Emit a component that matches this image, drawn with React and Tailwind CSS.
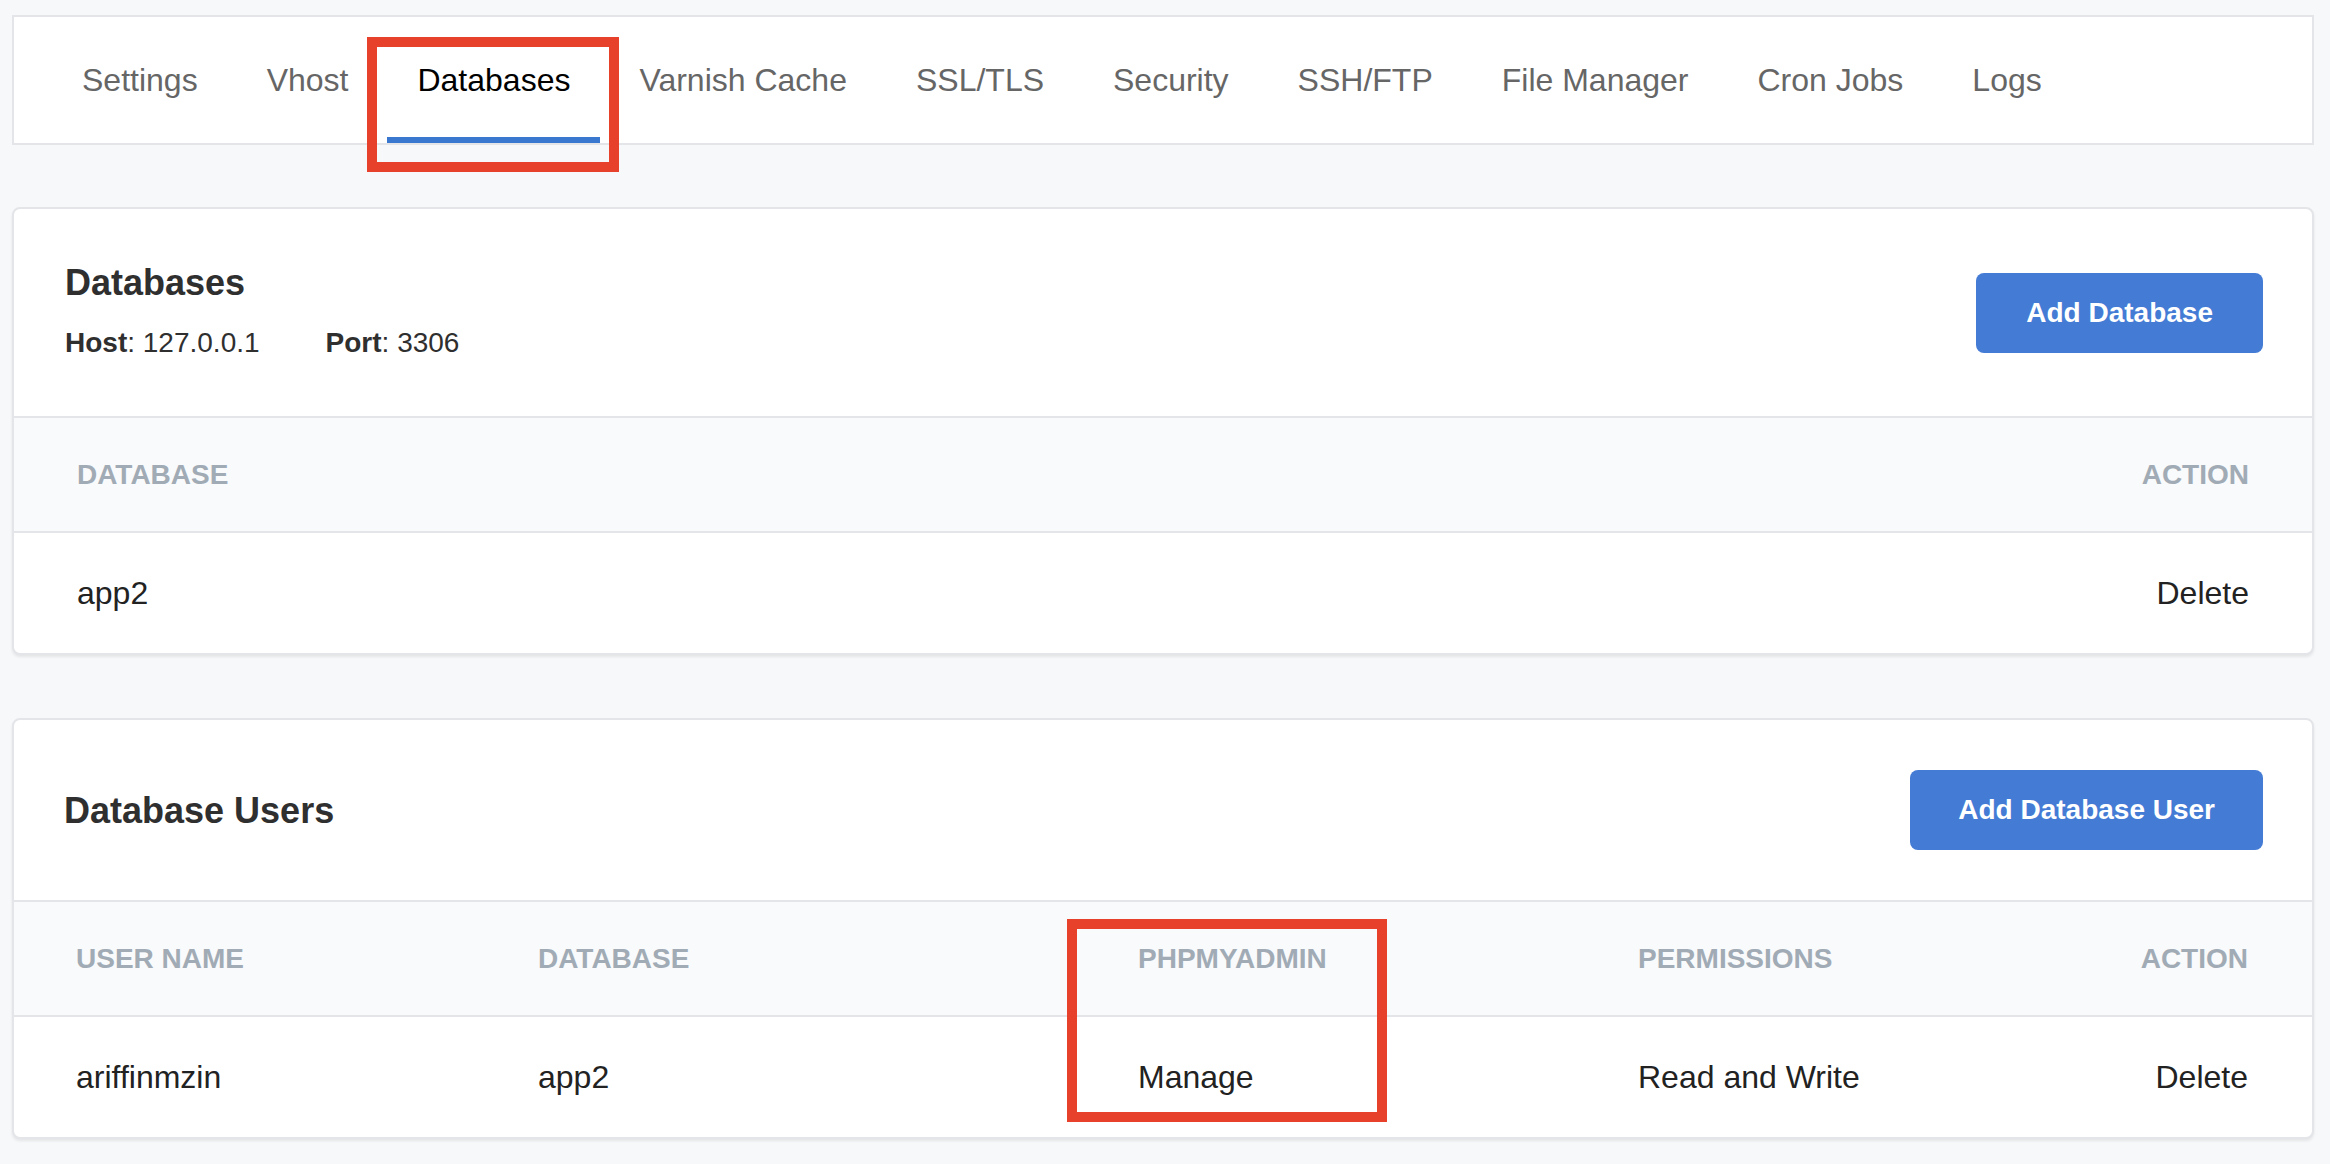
import React from 'react'

const tabs = [
  'Settings',
  'Vhost',
  'Databases',
  'Varnish Cache',
  'SSL/TLS',
  'Security',
  'SSH/FTP',
  'File Manager',
  'Cron Jobs',
  'Logs',
]

/* ------------------------------------------------------------------ */
/*  Tab bar                                                            */
/* ------------------------------------------------------------------ */

function TabBar({ active }) {
  return (
    <div className="flex h-[130px] items-stretch border-2 border-[#e3e5e8] bg-white pl-[38px]">
      <div className="flex items-stretch gap-[9px]">
        {tabs.map((t) => (
          <div
            key={t}
            className={
              t === active
                ? 'flex items-center border-y-[6px] border-t-transparent border-b-[#3a78d0] px-[30px] text-[32px] text-black'
                : 'flex items-center border-y-[6px] border-transparent px-[30px] text-[32px] text-[#666666]'
            }
          >
            {t}
          </div>
        ))}
      </div>
    </div>
  )
}

/* ------------------------------------------------------------------ */
/*  Card shell                                                         */
/* ------------------------------------------------------------------ */

function Card({ children, className }) {
  return (
    <div
      className={
        'overflow-hidden rounded-[8px] border-2 border-[#e3e5e8] bg-white shadow-[0_2px_3px_rgba(0,0,0,0.08)] ' +
        (className || '')
      }
    >
      {children}
    </div>
  )
}

function AddButton({ label, className }) {
  return (
    <button
      type="button"
      className={
        'h-[80px] rounded-[8px] bg-[#437bd5] text-[28px] font-bold text-white ' + (className || '')
      }
    >
      {label}
    </button>
  )
}

/* ================================================================== */
/*  App                                                                */
/* ================================================================== */

export default function App() {
  return (
    <div className="relative min-h-[1164px] bg-[#f7f8fa] pl-[12px] pr-[16px] pt-[15px] font-['Liberation_Sans',Arial,sans-serif]">
      <TabBar active="Databases" />

      {/* Databases */}
      <Card className="mt-[62px]">
        <div className="flex h-[209px] items-center justify-between border-b-2 border-[#e3e5e8] pl-[51px] pr-[49px]">
          <div>
            <h2 className="text-[36px] font-bold leading-[43px] text-[#2f2f2f]">Databases</h2>
            <div className="mt-[18px] flex text-[28px] leading-[42px] text-[#2f2f2f]">
              <span>
                <strong>Host</strong>: 127.0.0.1
              </span>
              <span className="ml-[66px]">
                <strong>Port</strong>: 3306
              </span>
            </div>
          </div>
          <AddButton label="Add Database" className="px-[50px]" />
        </div>
        <div className="flex h-[115px] items-center justify-between border-b-2 border-[#e3e5e8] bg-[#f9fafb] px-[63px] text-[28px] font-bold text-[#a1abb5]">
          <span>DATABASE</span>
          <span>ACTION</span>
        </div>
        <div className="flex h-[120px] items-center justify-between px-[63px] text-[32px] text-[#222222]">
          <span>app2</span>
          <span>Delete</span>
        </div>
      </Card>

      {/* Database Users */}
      <Card className="mt-[63px]">
        <div className="flex h-[182px] items-center justify-between border-b-2 border-[#e3e5e8] pl-[50px] pr-[49px]">
          <h2 className="text-[36px] font-bold leading-[43px] text-[#2f2f2f]">Database Users</h2>
          <AddButton label="Add Database User" className="px-[48px]" />
        </div>
        <div className="grid h-[115px] grid-cols-[462px_600px_500px_1fr_auto] items-center border-b-2 border-[#e3e5e8] bg-[#f9fafb] text-[28px] font-bold text-[#a1abb5]">
          <span className="pl-[62px]">USER NAME</span>
          <span className="pl-[62px]">DATABASE</span>
          <span className="pl-[62px]">PHPMYADMIN</span>
          <span className="pl-[62px]">PERMISSIONS</span>
          <span className="pr-[64px] text-right">ACTION</span>
        </div>
        <div className="grid h-[120px] grid-cols-[462px_600px_500px_1fr_auto] items-center text-[32px] text-[#222222]">
          <span className="pl-[62px]">ariffinmzin</span>
          <span className="pl-[62px]">app2</span>
          <span className="pl-[62px]">Manage</span>
          <span className="pl-[62px]">Read and Write</span>
          <span className="pr-[64px] text-right">Delete</span>
        </div>
      </Card>

      {/* annotation boxes */}
      <div className="absolute left-[367px] top-[37px] h-[135px] w-[252px] border-[10px] border-[#e8412b]" />
      <div className="absolute left-[1067px] top-[919px] h-[203px] w-[320px] border-[10px] border-[#e8412b]" />
    </div>
  )
}
